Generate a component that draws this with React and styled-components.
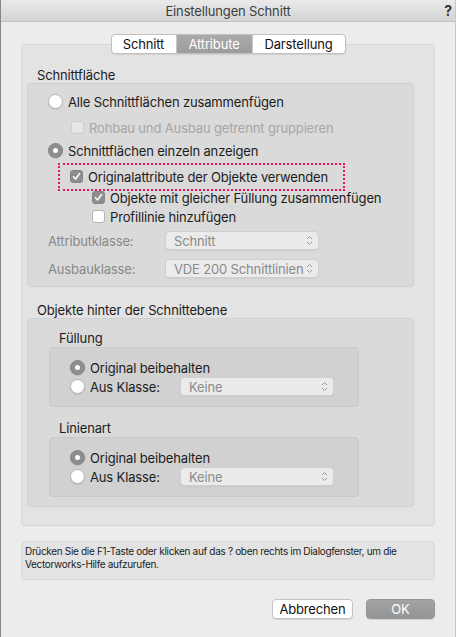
import React from 'react'
import styled, { createGlobalStyle } from 'styled-components'

const Global = createGlobalStyle`
    html, body {
        margin: 0;
        padding: 0;
        background: #ececec;
    }
    body {
        font-family: Inter, "Liberation Sans", Arial, sans-serif;
        color: #1c1c1c;
        letter-spacing: -0.15px;
    }
`

const Window = styled.div`
    width: 456px;
    height: 637px;
    box-sizing: border-box;
    background: #ececec;
    border-left: 1px solid #8c847d;
    border-right: 1px solid #c6c6c6;
    display: flex;
    flex-direction: column;
    white-space: nowrap;
`

const TitleBar = styled.div`
    height: 21px;
    flex: none;
    border-bottom: 1px solid #c2c2c2;
    background: linear-gradient(#ebeaeb, #d4d3d4);
    display: grid;
    grid-template-columns: 1fr auto 1fr;
    align-items: center;
    font-size: 13px;
    color: #3e3e3e;
`

const Title = styled.div`
    grid-column: 2;
`

const Help = styled.div`
    justify-self: end;
    margin-right: 3px;
    font-weight: 700;
    font-size: 14px;
    color: #333;
`

const Tabs = styled.div`
    display: flex;
    align-self: center;
    margin-top: 12px;
    height: 20px;
    box-sizing: border-box;
    border: 1px solid #c0c0c0;
    border-radius: 4px;
    background: #fff;
    overflow: hidden;
    position: relative;
    z-index: 1;
    box-shadow: 0 1px 1px rgba(0, 0, 0, 0.08);
`

const Tab = styled.div`
    width: ${p => p.$w}px;
    text-align: center;
    font-size: 13px;
    line-height: 18px;
    color: ${p => (p.$active ? '#fff' : '#111')};
    background: ${p => (p.$active ? 'linear-gradient(#aaaaaa, #9d9d9d)' : 'transparent')};
    & + & {
        border-left: 1px solid #c8c8c8;
    }
`

const Panel = styled.div`
    margin: -10px 20px 0 20px;
    background: #e3e3e3;
    border: 1px solid #d8d8d8;
    border-radius: 4px;
    padding: 23px 20px 18px 5px;
    display: flex;
    flex-direction: column;
`

const SectionLabel = styled.div`
    font-size: 13px;
    line-height: 15px;
    height: 15px;
    margin-left: ${p => p.$left || 10}px;
    margin-top: ${p => p.$top || 0}px;
`

const GroupBox = styled.div`
    background: #dadada;
    border: 1px solid #d0d0d0;
    border-radius: 4px;
    padding: 0 0 ${p => p.$bottom}px ${p => p.$left}px;
    display: flex;
    flex-direction: column;
`

const SubBox = styled.div`
    width: 310px;
    box-sizing: border-box;
    margin: 1px 0 0 21px;
    background: #d1d1d1;
    border: 1px solid #c9c9c9;
    border-radius: 4px;
    padding: 10px 0 10px 20px;
    display: flex;
    flex-direction: column;
`

const Row = styled.div`
    display: flex;
    align-items: center;
    height: 19px;
    margin-top: ${p => p.$top || 0}px;
    margin-left: ${p => p.$indent || 0}px;
    font-size: 13px;
    color: ${p => (p.$dim ? '#a6a6a6' : '#1c1c1c')};
    position: relative;
`

const Radio = styled.span`
    width: 15px;
    height: 15px;
    box-sizing: border-box;
    border-radius: 50%;
    flex: none;
    margin-right: 5px;
    border: 1px solid ${p => (p.$on ? '#858585' : '#b4b4b4')};
    background: ${p => (p.$on ? '#8e8e8e' : '#fff')};
    display: flex;
    align-items: center;
    justify-content: center;
    box-shadow: 0 1px 1px rgba(0, 0, 0, 0.1);
    &::after {
        content: '';
        width: 5px;
        height: 5px;
        border-radius: 50%;
        background: #fff;
        display: ${p => (p.$on ? 'block' : 'none')};
    }
`

const Box = styled.span`
    width: 13px;
    height: 13px;
    box-sizing: border-box;
    border-radius: 3px;
    flex: none;
    margin-right: 5px;
    border: 1px solid ${p => (p.$on ? '#858585' : p.$dim ? '#cdcdcd' : '#b4b4b4')};
    background: ${p => (p.$on ? '#8e8e8e' : p.$dim ? '#e6e6e6' : '#fff')};
    display: flex;
    align-items: center;
    justify-content: center;
`

const Highlight = styled.span`
    position: absolute;
    top: -4px;
    bottom: -5px;
    left: -12px;
    width: 283px;
    border: 2px dotted #e8175d;
    pointer-events: none;
`

const FieldLabel = styled.span`
    width: ${p => p.$w}px;
    flex: none;
    color: ${p => (p.$dim ? '#888' : '#1c1c1c')};
`

const Popup = styled.div`
    width: 154px;
    height: 19px;
    box-sizing: border-box;
    border: 1px solid #cfcfcf;
    border-radius: 4px;
    background: #ebebeb;
    display: flex;
    align-items: center;
    justify-content: space-between;
    padding: 0 5px 0 8px;
    color: #8a8a8a;
    font-size: 13px;
    box-shadow: 0 1px 1px rgba(0, 0, 0, 0.05);
`

const HelpBox = styled.div`
    margin: 15px 20px 0 20px;
    height: 39px;
    box-sizing: border-box;
    background: #e3e3e3;
    border: 1px solid #d8d8d8;
    border-radius: 4px;
    padding: 3px 3px;
    font-size: 10px;
    line-height: 13px;
    letter-spacing: -0.32px;
    color: #1c1c1c;
`

const Buttons = styled.div`
    display: flex;
    justify-content: flex-end;
    gap: 13px;
    margin: 19px 20px 0 0;
`

const Button = styled.div`
    width: ${p => p.$w}px;
    height: 20px;
    box-sizing: border-box;
    border-radius: 4px;
    font-size: 13px;
    line-height: 18px;
    text-align: center;
    border: 1px solid ${p => (p.$primary ? '#959595' : '#c3c3c3')};
    background: ${p => (p.$primary ? 'linear-gradient(#a3a3a3, #959595)' : '#fff')};
    color: ${p => (p.$primary ? '#fff' : '#111')};
    box-shadow: 0 1px 1px rgba(0, 0, 0, 0.1);
`

const Check = () => (
    <svg width="9" height="9" viewBox="0 0 9 9">
        <path d="M1.5 4.8 L3.6 7 L7.6 1.5" fill="none" stroke="#fff" strokeWidth="1.5" strokeLinecap="round" strokeLinejoin="round" />
    </svg>
)

const Arrows = () => (
    <svg width="7" height="11" viewBox="0 0 7 11">
        <path d="M1 4 L3.5 1.5 L6 4 M1 7 L3.5 9.5 L6 7" fill="none" stroke="#9a9a9a" strokeWidth="1" />
    </svg>
)

const Select = ({ value }) => (
    <Popup>
        <span>{value}</span>
        <Arrows />
    </Popup>
)

const ClassBox = ({ title, top }) => (
    <>
        <SectionLabel $left={31} $top={top}>{title}</SectionLabel>
        <SubBox>
            <Row>
                <Radio $on />
                Original beibehalten
            </Row>
            <Row>
                <Radio />
                <FieldLabel $w={90}>Aus Klasse:</FieldLabel>
                <Select value="Keine" />
            </Row>
        </SubBox>
    </>
)

export default function App() {
    return (
        <>
            <Global />
            <Window>
                <TitleBar>
                    <Title>Einstellungen Schnitt</Title>
                    <Help>?</Help>
                </TitleBar>
                <Tabs>
                    <Tab $w={64}>Schnitt</Tab>
                    <Tab $w={75} $active>Attribute</Tab>
                    <Tab $w={92}>Darstellung</Tab>
                </Tabs>
                <Panel>
                    <SectionLabel>Schnittfläche</SectionLabel>
                    <GroupBox $bottom={8} $left={20}>
                        <Row $top={8}>
                            <Radio />
                            Alle Schnittflächen zusammenfügen
                        </Row>
                        <Row $top={7} $indent={23} $dim>
                            <Box $dim />
                            Rohbau und Ausbau getrennt gruppieren
                        </Row>
                        <Row $top={4}>
                            <Radio $on />
                            Schnittflächen einzeln anzeigen
                        </Row>
                        <Row $top={7} $indent={22}>
                            <Box $on><Check /></Box>
                            Originalattribute der Objekte verwenden
                            <Highlight />
                        </Row>
                        <Row $top={2} $indent={44}>
                            <Box $on><Check /></Box>
                            Objekte mit gleicher Füllung zusammenfügen
                        </Row>
                        <Row $indent={44}>
                            <Box />
                            Profillinie hinzufügen
                        </Row>
                        <Row $top={5}>
                            <FieldLabel $w={117} $dim>Attributklasse:</FieldLabel>
                            <Select value="Schnitt" />
                        </Row>
                        <Row $top={9}>
                            <FieldLabel $w={117} $dim>Ausbauklasse:</FieldLabel>
                            <Select value="VDE 200 Schnittlinien" />
                        </Row>
                    </GroupBox>
                    <SectionLabel $top={16}>Objekte hinter der Schnittebene</SectionLabel>
                    <GroupBox $bottom={9} $left={0}>
                        <ClassBox title="Füllung" top={12} />
                        <ClassBox title="Linienart" top={14} />
                    </GroupBox>
                </Panel>
                <HelpBox>
                    Drücken Sie die F1-Taste oder klicken auf das ? oben rechts im Dialogfenster, um die
                    <br />
                    Vectorworks-Hilfe aufzurufen.
                </HelpBox>
                <Buttons>
                    <Button $w={81}>Abbrechen</Button>
                    <Button $w={69} $primary>OK</Button>
                </Buttons>
            </Window>
        </>
    )
}
